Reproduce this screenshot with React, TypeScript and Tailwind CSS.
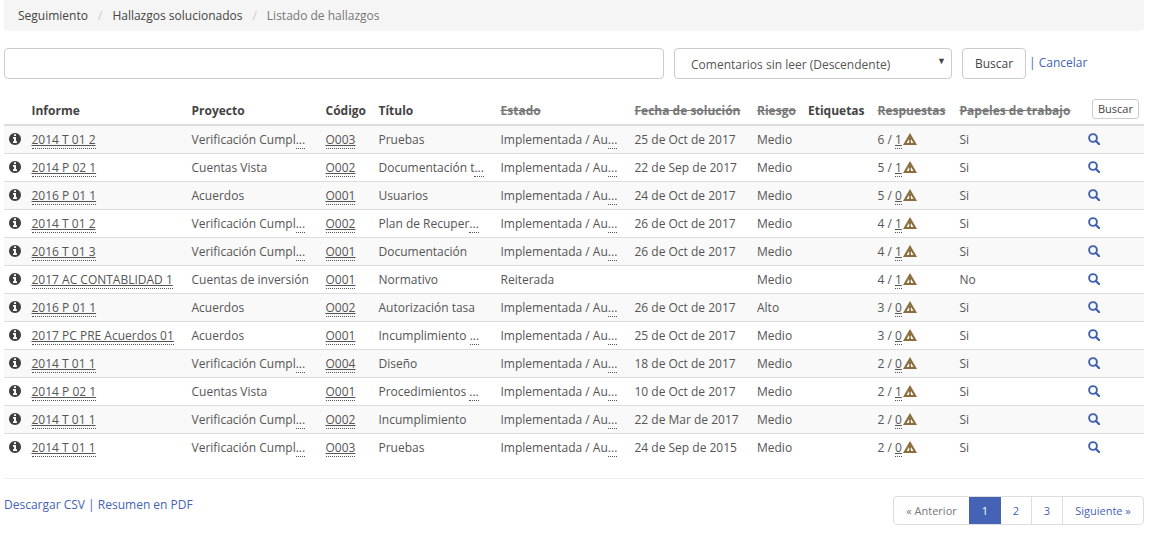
import React from "react";

const F = { fontFamily: '"Open Sans", "Liberation Sans", sans-serif' };

function Abbr({ children }: { children: React.ReactNode }) {
  return <span className="border-b border-dotted border-[#555] underline decoration-solid">{children}</span>;
}
function Trunc({ t }: { t: string }) {
  return (
    <span>
      {t}
      <span className="border-b border-dotted border-[#555]">...</span>
    </span>
  );
}
function InfoIcon() {
  return (
    <svg width="12" height="12" viewBox="0 0 1536 1536" className="block">
      <path
        fill="#3f3f3f"
        d="M1024 1248v-160q0-14-9-23t-23-9h-96V544q0-14-9-23t-23-9H544q-14 0-23 9t-9 23v160q0 14 9 23t23 9h96v320h-96q-14 0-23 9t-9 23v160q0 14 9 23t23 9h448q14 0 23-9t9-23zM896 352V192q0-14-9-23t-23-9H672q-14 0-23 9t-9 23v160q0 14 9 23t23 9h192q14 0 23-9t9-23zm640 416q0 209-103 385.5T1153.5 1433 768 1536t-385.5-103T103 1153.5 0 768t103-385.5T382.5 103 768 0t385.5 103T1433 382.5 1536 768z"
      />
    </svg>
  );
}
function Warn() {
  return (
    <svg width="14" height="12" viewBox="0 0 14 12" className="inline-block ml-[1px] align-[-1px]">
      <path fill="#8a6d3b" fillRule="evenodd" d="M7 0 L14 12 H0 Z M7 4.2 L3.6 10 H10.4 Z" />
      <rect x="6" y="4.6" width="2" height="3.2" fill="#8a6d3b" />
      <rect x="6" y="8.3" width="2" height="1.7" fill="#8a6d3b" />
    </svg>
  );
}
function Search() {
  return (
    <svg width="12" height="12" viewBox="0 0 12 12" className="block">
      <circle cx="5" cy="5" r="3.9" fill="none" stroke="#3f5fb0" strokeWidth="1.9" />
      <path d="M8 8 L11.2 11.2" stroke="#3f5fb0" strokeWidth="2.2" strokeLinecap="round" />
    </svg>
  );
}

type Row = [string, string | [string], string, string | [string], string | [string], string, string, string, string, string];
const V: [string] = ["Verificación Cumpl"];
const I: [string] = ["Implementada / Au"];
const rows: Row[] = [
  ["2014 T 01 2", V, "O003", "Pruebas", I, "25 de Oct de 2017", "Medio", "6", "1", "Si"],
  ["2014 P 02 1", "Cuentas Vista", "O002", ["Documentación t"], I, "22 de Sep de 2017", "Medio", "5", "1", "Si"],
  ["2016 P 01 1", "Acuerdos", "O001", "Usuarios", I, "24 de Oct de 2017", "Medio", "5", "0", "Si"],
  ["2014 T 01 2", V, "O002", ["Plan de Recuper"], I, "26 de Oct de 2017", "Medio", "4", "1", "Si"],
  ["2016 T 01 3", V, "O001", "Documentación", I, "26 de Oct de 2017", "Medio", "4", "1", "Si"],
  ["2017 AC CONTABLIDAD 1", "Cuentas de inversión", "O001", "Normativo", "Reiterada", "", "Medio", "4", "1", "No"],
  ["2016 P 01 1", "Acuerdos", "O002", "Autorización tasa", I, "26 de Oct de 2017", "Alto", "3", "0", "Si"],
  ["2017 PC PRE Acuerdos 01", "Acuerdos", "O001", ["Incumplimiento "], I, "25 de Oct de 2017", "Medio", "3", "0", "Si"],
  ["2014 T 01 1", V, "O004", "Diseño", I, "18 de Oct de 2017", "Medio", "2", "0", "Si"],
  ["2014 P 02 1", "Cuentas Vista", "O001", ["Procedimientos "], I, "10 de Oct de 2017", "Medio", "2", "1", "Si"],
  ["2014 T 01 1", V, "O002", "Incumplimiento", I, "22 de Mar de 2017", "Medio", "2", "0", "Si"],
  ["2014 T 01 1", V, "O003", "Pruebas", I, "24 de Sep de 2015", "Medio", "2", "0", "Si"],
];
const cell = (v: string | [string]) => (typeof v === "string" ? v : <Trunc t={v[0]} />);
const widths = [27.5, 160, 134, 53, 122, 134, 122.5, 51, 69.5, 82, 128.5, 56];
const heads: [string, boolean][] = [
  ["", false],
  ["Informe", false],
  ["Proyecto", false],
  ["Código", false],
  ["Título", false],
  ["Estado", true],
  ["Fecha de solución", true],
  ["Riesgo", true],
  ["Etiquetas", false],
  ["Respuestas", true],
  ["Papeles de trabajo", true],
];

export default function App() {
  return (
    <div style={F} className="w-[1155px] h-[541px] overflow-hidden bg-white px-1 text-[12px] text-[#555] leading-[18px]">
      <div className="w-[1140px]">
        <nav className="h-[31px] bg-[#f5f5f5] rounded-b-[4px] pl-[14px] pt-[7px] flex">
          <span className="text-[#444]">Seguimiento</span>
          <span className="text-[#ccc] mx-[10px]">/</span>
          <span className="text-[#444]">Hallazgos solucionados</span>
          <span className="text-[#ccc] mx-[10px]">/</span>
          <span className="text-[#777]">Listado de hallazgos</span>
        </nav>
        <div className="flex items-start mt-[17px]">
          <input className="w-[660px] h-[31px] border border-[#ccc] rounded-[4px] bg-white" />
          <div className="relative w-[278px] h-[31px] ml-[10px] border border-[#ccc] rounded-[4px] pl-[16px] pt-[7px] text-[#555]">
            Comentarios sin leer (Descendente)
            <span className="absolute right-[5px] top-[3px] text-[#444] text-[9px]">▼</span>
          </div>
          <button className="w-[64px] h-[31px] ml-[10px] border border-[#ccc] rounded-[4px] bg-white text-[#444] text-[12px]">Buscar</button>
          <span className="ml-[3px] mt-[6px] text-[#4563b5]">| Cancelar</span>
        </div>
        <table className="mt-[19px] table-fixed border-collapse w-[1140px]">
          <colgroup>
            {widths.map((w, i) => (
              <col key={i} style={{ width: w }} />
            ))}
          </colgroup>
          <thead>
            <tr className="h-[27px] border-b-2 border-[#ddd]">
              {heads.map(([h, s], i) => (
                <th key={i} className={"p-0 text-left font-bold text-[12px] whitespace-nowrap " + (s ? "line-through text-[#777]" : "text-[#444]")}>
                  {h}
                </th>
              ))}
              <th className="p-0 pl-[4px] text-left">
                <button className="h-[20px] w-[47px] -mt-[5px] border border-[#ccc] rounded-[3px] bg-white text-[11px] font-normal text-[#444] block">Buscar</button>
              </th>
              <th className="p-0"></th>
            </tr>
          </thead>
          <tbody>
            {rows.map((r, i) => (
              <tr key={i} className={"h-[28px] border-b border-[#ddd] " + (i % 2 === 0 ? "bg-[#f9f9f9]" : "bg-white") + (i === 11 ? " border-b-0" : "")}>
                <td className="p-0 pt-[2px] pl-[5px]"><div className="-mt-[2px]"><InfoIcon /></div></td>
                <td className="p-0 pt-[2px] whitespace-nowrap"><Abbr>{r[0]}</Abbr></td>
                <td className="p-0 pt-[2px] whitespace-nowrap">{cell(r[1])}</td>
                <td className="p-0 pt-[2px]"><Abbr>{r[2]}</Abbr></td>
                <td className="p-0 pt-[2px] whitespace-nowrap">{cell(r[3])}</td>
                <td className="p-0 pt-[2px] whitespace-nowrap">{cell(r[4])}</td>
                <td className="p-0 pt-[2px] whitespace-nowrap">{r[5]}</td>
                <td className="p-0 pt-[2px]">{r[6]}</td>
                <td className="p-0"></td>
                <td className="p-0 pt-[2px] whitespace-nowrap">
                  {r[7]} / <Abbr>{r[8]}</Abbr><Warn />
                </td>
                <td className="p-0 pt-[2px]">{r[9]}</td>
                <td className="p-0 pt-[2px]"><div className="-mt-[2px]"><Search /></div></td>
                <td className="p-0"></td>
              </tr>
            ))}
          </tbody>
        </table>
        <div className="mt-[17px] border-t border-[#eee] flex justify-between items-start">
          <div className="mt-[17px] text-[#4563b5]">Descargar CSV | Resumen en PDF</div>
          <div className="mt-[17px] flex h-[29px] border border-[#ddd] rounded-[4px] text-[11px] items-stretch">
            <span className="w-[75px] flex items-center justify-center text-[#777]">« Anterior</span>
            <span className="w-[32px] flex items-center justify-center bg-[#4463b5] text-white">1</span>
            <span className="w-[31px] flex items-center justify-center text-[#4563b5] border-r border-[#ddd]">2</span>
            <span className="w-[31px] flex items-center justify-center text-[#4563b5] border-r border-[#ddd]">3</span>
            <span className="w-[80px] flex items-center justify-center text-[#4563b5]">Siguiente »</span>
          </div>
        </div>
      </div>
    </div>
  );
}
